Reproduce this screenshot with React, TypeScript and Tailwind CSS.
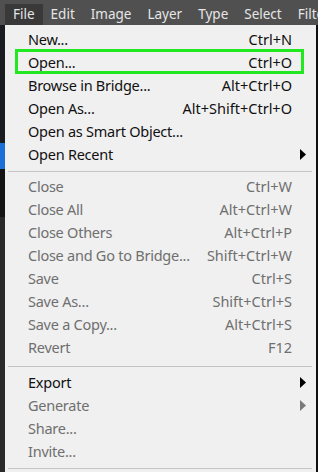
import React from 'react';

type Item = {
  label: string;
  shortcut?: string;
  disabled?: boolean;
  submenu?: boolean;
  highlight?: boolean;
};

const topMenus = ['File', 'Edit', 'Image', 'Layer', 'Type', 'Select', 'Filter'];

const groupA: Item[] = [
  { label: 'New...', shortcut: 'Ctrl+N' },
  { label: 'Open...', shortcut: 'Ctrl+O', highlight: true },
  { label: 'Browse in Bridge...', shortcut: 'Alt+Ctrl+O' },
  { label: 'Open As...', shortcut: 'Alt+Shift+Ctrl+O' },
  { label: 'Open as Smart Object...' },
  { label: 'Open Recent', submenu: true },
];

const groupB: Item[] = [
  { label: 'Close', shortcut: 'Ctrl+W', disabled: true },
  { label: 'Close All', shortcut: 'Alt+Ctrl+W', disabled: true },
  { label: 'Close Others', shortcut: 'Alt+Ctrl+P', disabled: true },
  { label: 'Close and Go to Bridge...', shortcut: 'Shift+Ctrl+W', disabled: true },
  { label: 'Save', shortcut: 'Ctrl+S', disabled: true },
  { label: 'Save As...', shortcut: 'Shift+Ctrl+S', disabled: true },
  { label: 'Save a Copy...', shortcut: 'Alt+Ctrl+S', disabled: true },
  { label: 'Revert', shortcut: 'F12', disabled: true },
];

const groupC: Item[] = [
  { label: 'Export', submenu: true },
  { label: 'Generate', submenu: true, disabled: true },
  { label: 'Share...', disabled: true },
  { label: 'Invite...', disabled: true },
];

function Arrow({ disabled }: { disabled?: boolean }) {
  return (
    <svg width="6" height="11" viewBox="0 0 6 11" className="absolute right-[10px] top-[6px]">
      <path d="M0 0 L6 5.5 L0 11 Z" fill={disabled ? '#7a7a7a' : '#000000'} />
    </svg>
  );
}

function MenuRow({ item }: { item: Item }) {
  return (
    <div
      className={`relative flex h-[23px] items-center justify-between pl-[23px] pr-[24px] ${
        item.disabled ? 'text-[#6f6f6f]' : 'text-[#111111]'
      }`}
    >
      <span className="tracking-[-0.25px]">{item.label}</span>
      {item.shortcut && <span>{item.shortcut}</span>}
      {item.submenu && <Arrow disabled={item.disabled} />}
      {item.highlight && (
        <div className="absolute left-[10px] top-[-2px] h-[25px] w-[289px] border-[3px] border-[#22e822]" />
      )}
    </div>
  );
}

function Separator({ h, top }: { h: string; top: string }) {
  return (
    <div className={`relative ${h}`}>
      <div className={`absolute left-[3px] right-[4px] ${top} h-px bg-[#c4c4c4]`} />
    </div>
  );
}

export default function App() {
  return (
    <div
      className="flex h-[472px] w-[318px] flex-col overflow-hidden bg-[#1c1c1c] text-[14.5px] leading-none"
      style={{ fontFamily: '"Segoe UI", "Noto Sans", "Open Sans", sans-serif' }}
    >
      {/* menu bar */}
      <div className="flex h-[25px] shrink-0 items-end overflow-hidden bg-[#505050] pl-[5px] text-[13.5px] text-[#e6e6e6] whitespace-nowrap">
        {topMenus.map((m, i) => (
          <div
            key={m}
            className={`flex h-[21px] items-center px-[8px] ${i === 0 ? 'bg-[#393939]' : ''}`}
          >
            {m}
          </div>
        ))}
      </div>

      <div className="flex flex-1">
        {/* left strip of the canvas behind */}
        <div className="flex w-[5px] flex-col bg-[#1a1c22]">
          <div className="h-[118px]" />
          <div className="h-[26px] bg-[#1d6fd8]" />
          <div className="h-[48px] bg-[#141414]" />
          <div className="flex-1 bg-[#2a2a2a]" />
        </div>

        {/* dropdown panel */}
        <div className="flex-1 bg-[#f0f0f0] pt-[3px] whitespace-nowrap">
          {groupA.map((it) => (
            <MenuRow key={it.label} item={it} />
          ))}
          <Separator h="h-[9px]" top="top-[5px]" />
          {groupB.map((it) => (
            <MenuRow key={it.label} item={it} />
          ))}
          <Separator h="h-[12px]" top="top-[7px]" />
          {groupC.map((it) => (
            <MenuRow key={it.label} item={it} />
          ))}
          <Separator h="h-[9px]" top="top-[5px]" />
        </div>

        <div className="w-[2px] bg-[#111111]" />
      </div>
    </div>
  );
}
